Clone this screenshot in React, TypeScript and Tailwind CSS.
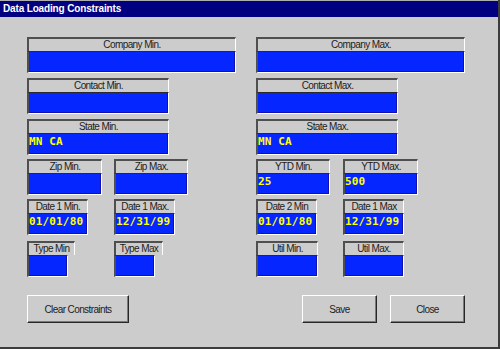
import React from "react";

type FieldProps = {
  label: string;
  w: number;
  boxW?: number;
  value?: string;
};

function Field({ label, w, boxW, value }: FieldProps) {
  const bw = boxW ?? w;
  return (
    <div className="flex flex-col">
      <div
        style={{ width: w }}
        className="h-[14px] border-t-2 border-l-2 border-[#4f4f4f] border-r border-r-white text-center text-[10px] leading-[12px] tracking-[-0.6px] text-[#1c1c1c] whitespace-nowrap overflow-hidden"
      >
        {label}
      </div>
      <div
        style={{ width: bw }}
        className="h-[22px] border-l-2 border-l-[#4f4f4f] border-t border-t-[#2a2a2a] border-r border-b border-r-white border-b-white bg-[#0526ff] shadow-[inset_-1px_-1px_0_#1010b0] font-['DejaVu_Sans_Mono',monospace] font-bold text-[11px] leading-[16px] tracking-[0.15px] text-[#ffff00] whitespace-pre"
      >
        {value ?? ""}
      </div>
    </div>
  );
}

function Pair({ a, b }: { a: React.ReactNode; b: React.ReactNode }) {
  return (
    <div className="flex">
      <div className="w-[87px]">{a}</div>
      <div>{b}</div>
    </div>
  );
}

function Btn({ children, w }: { children: React.ReactNode; w: number }) {
  return (
    <div
      style={{ width: w }}
      className="h-[28px] border-t border-l border-white border-r border-b border-r-[#262626] border-b-[#262626] shadow-[inset_-1px_-1px_0_#7a7a7a] flex items-center justify-center text-[10px] tracking-[-0.6px] text-[#1c1c1c]"
    >
      {children}
    </div>
  );
}

export default function App() {
  return (
    <div className="w-[500px] h-[349px] bg-[#cccccc] border-r-2 border-b-2 border-[#3c3c3c] flex flex-col font-['Liberation_Sans',Arial,sans-serif] overflow-hidden">
      <div className="h-[17px] shrink-0 bg-[#000080] border-t border-[#b0b0b0] text-white font-bold text-[10px] leading-[16px] pl-[3px] tracking-[-0.15px]">
        Data Loading Constraints
      </div>
      <div className="pl-[27px] pt-[20px] grid grid-cols-[229px_229px]">
        <div className="flex flex-col">
          <Field label="Company Min." w={209} />
          <div className="mt-[5px]">
            <Field label="Contact Min." w={142} />
          </div>
          <div className="mt-[5px]">
            <Field label="State Min." w={142} value="MN CA" />
          </div>
          <div className="mt-[4px]">
            <Pair a={<Field label="Zip Min." w={75} />} b={<Field label="Zip Max." w={74} />} />
          </div>
          <div className="mt-[4px]">
            <Pair
              a={<Field label="Date 1 Min." w={61} value="01/01/80" />}
              b={<Field label="Date 1 Max." w={61} value="12/31/99" />}
            />
          </div>
          <div className="mt-[6px]">
            <Pair
              a={<Field label="Type Min" w={48} boxW={41} />}
              b={<Field label="Type Max" w={49} boxW={41} />}
            />
          </div>
          <div className="mt-[18px]">
            <Btn w={102}>Clear Constraints</Btn>
          </div>
        </div>
        <div className="flex flex-col">
          <Field label="Company Max." w={209} />
          <div className="mt-[5px]">
            <Field label="Contact Max." w={142} />
          </div>
          <div className="mt-[5px]">
            <Field label="State Max." w={142} value="MN CA" />
          </div>
          <div className="mt-[4px]">
            <Pair
              a={<Field label="YTD Min." w={74} value="25" />}
              b={<Field label="YTD Max." w={75} value="500" />}
            />
          </div>
          <div className="mt-[4px]">
            <Pair
              a={<Field label="Date 2 Min" w={61} value="01/01/80" />}
              b={<Field label="Date 1 Max" w={61} value="12/31/99" />}
            />
          </div>
          <div className="mt-[6px]">
            <Pair a={<Field label="Util Min." w={62} />} b={<Field label="Util Max." w={61} />} />
          </div>
          <div className="mt-[18px] w-[209px] flex justify-end gap-[13px]">
            <Btn w={75}>Save</Btn>
            <Btn w={75}>Close</Btn>
          </div>
        </div>
      </div>
    </div>
  );
}
